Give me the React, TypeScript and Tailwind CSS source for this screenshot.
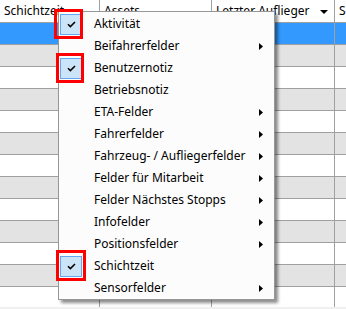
import React from "react";

const items: { label: string; checked?: boolean; sub?: boolean }[] = [
  { label: "Aktivität", checked: true },
  { label: "Beifahrerfelder", sub: true },
  { label: "Benutzernotiz", checked: true },
  { label: "Betriebsnotiz" },
  { label: "ETA-Felder", sub: true },
  { label: "Fahrerfelder", sub: true },
  { label: "Fahrzeug- / Aufliegerfelder", sub: true },
  { label: "Felder für Mitarbeit", sub: true },
  { label: "Felder Nächstes Stopps", sub: true },
  { label: "Infofelder", sub: true },
  { label: "Positionsfelder", sub: true },
  { label: "Schichtzeit", checked: true },
  { label: "Sensorfelder", sub: true },
];

function Check() {
  return (
    <svg width="9" height="7" viewBox="0 0 9 7" className="block">
      <path d="M1 3.2 L3.4 5.6 L8 1" stroke="#000" strokeWidth="1.6" fill="none" />
    </svg>
  );
}

function Arrow() {
  return (
    <svg width="4" height="7" viewBox="0 0 4 7" className="block">
      <path d="M0 0 L4 3.5 L0 7 Z" fill="#000" />
    </svg>
  );
}

export default function App() {
  const rows = Array.from({ length: 13 }, (_, i) => i);
  return (
    <div className="relative w-[346px] h-[309px] bg-[#f0f0f0] overflow-hidden font-['Noto_Sans',sans-serif] text-[12px] text-black">
      <div className="h-[307px] bg-white overflow-hidden">
        {/* header */}
        <div className="grid grid-cols-[100px_112px_123px_1fr] h-[23px] border-b border-[#a0a0a0] bg-white">
          <div className="border-r border-[#a0a0a0] pl-[4px] flex items-center leading-none">Schichtzeit</div>
          <div className="border-r border-[#a0a0a0] pl-[4px] flex items-center leading-none">Assets</div>
          <div className="border-r border-[#a0a0a0] pl-[4px] pr-[6px] flex items-center justify-between leading-none">
            <span>Letzter Auflieger</span>
            <svg width="8" height="4" viewBox="0 0 8 4" className="block mt-[2px]">
              <path d="M0 0 L8 0 L4 4 Z" fill="#000" />
            </svg>
          </div>
          <div className="pl-[4px] flex items-center leading-none">Schichtzeit</div>
        </div>
        {rows.map((i) => (
          <div
            key={i}
            className={`grid grid-cols-[100px_112px_123px_1fr] h-[22px] border-b border-[#a0a0a0] ${
              i === 0 ? "bg-[#3399ff]" : i % 2 === 1 ? "bg-[#e3e3e3]" : "bg-white"
            }`}
          >
            <div className="border-r border-[#a0a0a0]" />
            <div className="border-r border-[#a0a0a0]" />
            <div className="border-r border-[#a0a0a0]" />
            <div />
          </div>
        ))}
      </div>

      {/* context menu */}
      <div className="absolute left-[58px] top-[11px] w-[217px] border border-[#979797] bg-[#fcfcfc] pt-px shadow-[3px_3px_3px_rgba(0,0,0,0.45)]">
        {items.map((it) => (
          <div key={it.label} className="relative h-[22px] flex items-center pl-[35px] pr-[11px] leading-none whitespace-nowrap">
            {it.checked && (
              <div className="absolute left-[1px] top-[1px] w-[22px] h-[21px] bg-[#cce4f7] border border-[#62a8f0] flex items-center justify-center">
                <Check />
              </div>
            )}
            <span className="flex-1">{it.label}</span>
            {it.sub && <Arrow />}
          </div>
        ))}
      </div>

      {/* red annotation boxes */}
      <div className="absolute left-[54px] top-[9px] w-[29px] h-[30px] border-[3px] border-[#ff0000]" />
      <div className="absolute left-[56px] top-[53px] w-[28px] h-[30px] border-[3px] border-[#ff0000]" />
      <div className="absolute left-[56px] top-[250px] w-[30px] h-[31px] border-[3px] border-[#ff0000]" />
    </div>
  );
}
